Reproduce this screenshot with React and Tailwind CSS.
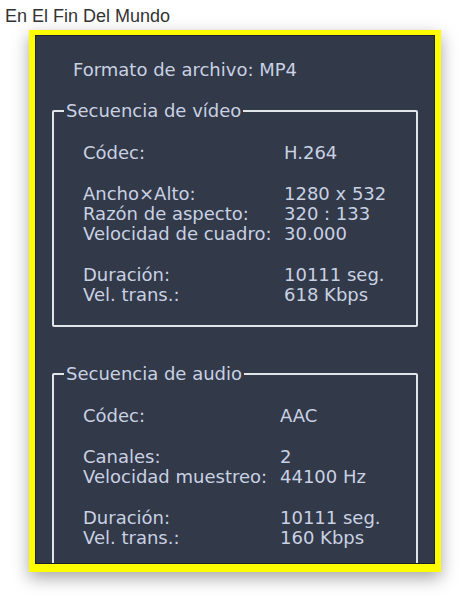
const video = [
  [["Códec:", "H.264"]],
  [
    ["Ancho×Alto:", "1280 x 532"],
    ["Razón de aspecto:", "320 : 133"],
    ["Velocidad de cuadro:", "30.000"],
  ],
  [
    ["Duración:", "10111 seg."],
    ["Vel. trans.:", "618 Kbps"],
  ],
];

const audio = [
  [["Códec:", "AAC"]],
  [
    ["Canales:", "2"],
    ["Velocidad muestreo:", "44100 Hz"],
  ],
  [
    ["Duración:", "10111 seg."],
    ["Vel. trans.:", "160 Kbps"],
  ],
];

const Group = ({ title, blocks, labelCol }) => {
  return (
    <fieldset className="mx-[16px] border-2 border-[#e2e5ea] rounded-[2px]">
      <legend className="ml-[10px] px-[2px]">{title}</legend>
      <div className="flex flex-col gap-[21px] pt-[22px] pb-[20px] pl-[29px]">
        {blocks.map((rows, i) => (
          <div key={i} className={`grid ${labelCol}`}>
            {rows.map(([label, value]) => (
              <div key={label} className="contents">
                <span>{label}</span>
                <span>{value}</span>
              </div>
            ))}
          </div>
        ))}
      </div>
    </fieldset>
  );
};

export default function App() {
  return (
    <div className="min-h-[600px] bg-white">
      <h1 className="pt-[4px] pl-[5px] text-[18px] leading-[24px] text-[#333] font-['Liberation_Sans',Arial,sans-serif]">
        En El Fin Del Mundo
      </h1>
      <div className="mt-[2px] ml-[29px] w-[412px] h-[542px] bg-[#ffff00] border-t-[5px] border-x-[6px] border-b-[8px] border-[#ffff00] shadow-[0_6px_16px_rgba(0,0,0,0.35)]">
        <div className="h-full overflow-hidden border border-[#1c2130] bg-[#323949] text-[#c9d1e2] text-[18px] leading-[20px] font-['DejaVu_Sans',Verdana,sans-serif]">
          <p className="pt-[24px] pl-[37px]">Formato de archivo: MP4</p>
          <div className="mt-[21px]">
            <Group title="Secuencia de vídeo" blocks={video} labelCol="grid-cols-[201px_1fr]" />
          </div>
          <div className="mt-[37px]">
            <Group title="Secuencia de audio" blocks={audio} labelCol="grid-cols-[197px_1fr]" />
          </div>
        </div>
      </div>
    </div>
  );
}
